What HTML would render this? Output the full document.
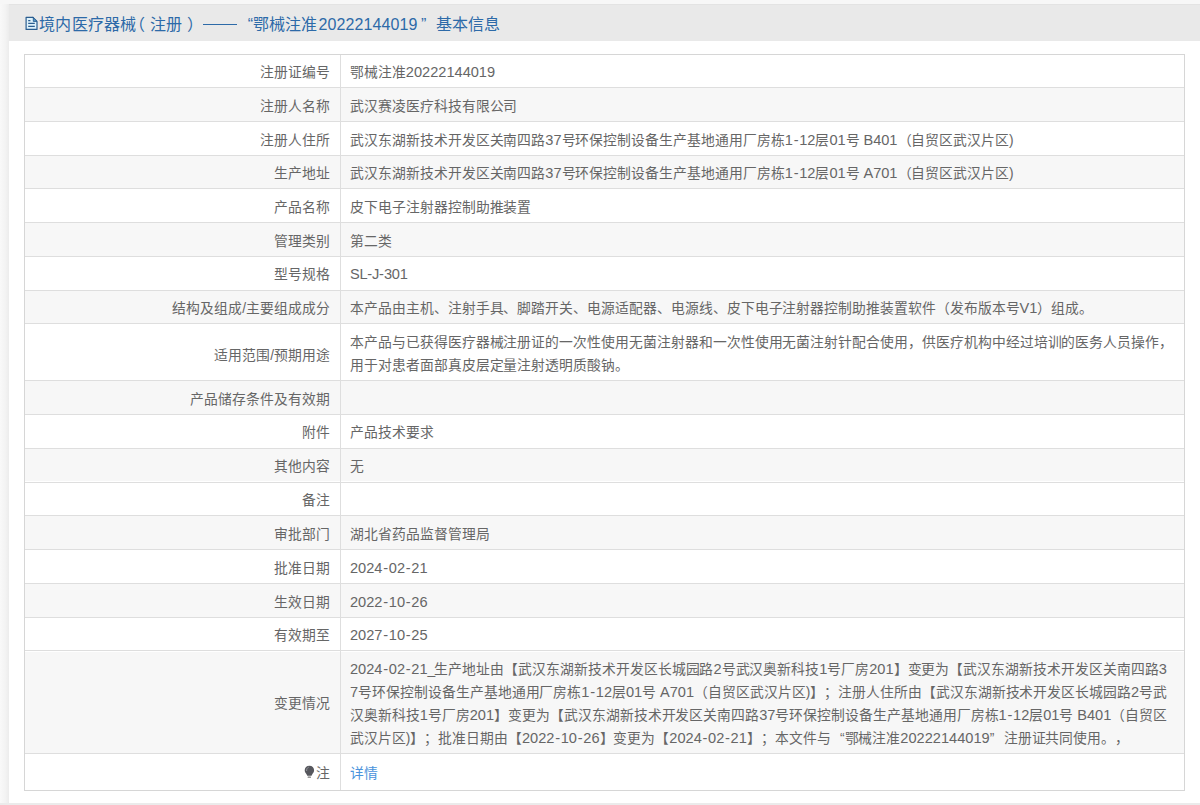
<!DOCTYPE html>
<html lang="zh-CN"><head><meta charset="utf-8">
<style>
html,body{margin:0;padding:0;text-spacing-trim:space-all;}
body{width:1200px;height:805px;background:#f4f4f4;position:relative;overflow:hidden;font-family:"Liberation Sans",sans-serif;}
#lstrip{position:absolute;left:0;top:0;width:8.5px;height:805px;background:linear-gradient(to right,#f9f9f9,#f3f3f3 60%,#ececec);}
#tstrip{position:absolute;left:0;top:0;width:1200px;height:3.5px;background:#f7f7f7;}
#bstrip{position:absolute;left:0;top:803px;width:1200px;height:2px;background:#ebebeb;}
#panel{position:absolute;left:8.5px;top:3.5px;width:1191.5px;height:799.5px;background:#fff;}
#hdr{position:absolute;left:8.5px;top:3.5px;width:1191.5px;height:37px;background:#e9e9e9;border-top:0.6px solid #e3e3e3;box-sizing:border-box;}
.t{position:absolute;top:13.50px;font-size:16px;line-height:22px;color:#2d6aa8;white-space:nowrap;}
#ico{position:absolute;left:24.5px;top:15.5px;}
#tbl{position:absolute;left:24px;top:54px;width:1159px;height:735px;border:1px solid #d6d6d6;}
.bg{position:absolute;left:25px;width:1159px;background:#f7f7f7;}
.hl{position:absolute;left:25px;width:1159px;height:1px;background:#dedede;}
#vline{position:absolute;left:340px;top:55px;width:1px;height:735px;background:#dedede;z-index:2;}
.lb{position:absolute;right:869.9px;line-height:23px;font-size:13.8px;color:#666;white-space:nowrap;text-align:right;}
.vl{position:absolute;left:350px;letter-spacing:-0.05px;line-height:23px;font-size:13.8px;color:#666;white-space:nowrap;}
i{font-style:normal;}
i.d{letter-spacing:0.00px;font-size:14.6px;}
i.u{letter-spacing:-0.8px;}
i.s{letter-spacing:0px;}
i.h{margin:0 0.75px;font-size:14.6px;}
i.ql,i.qr{display:inline-block;width:14px;}
i.ql{text-align:right;}
i.qr{text-align:left;}
a{color:#4a93dc;text-decoration:none;}
.bulb{vertical-align:0.5px;margin-right:1px;}
</style></head><body>
<div id="lstrip"></div><div id="tstrip"></div><div id="bstrip"></div>
<div id="panel"></div>
<div id="hdr"></div>
<svg id="ico" width="14" height="15" viewBox="0 0 14 15"><path d="M1.1 1.3H7.9L12 5.4V13.4H1.1Z" fill="#dff2fb" stroke="#2a5d90" stroke-width="1.2" stroke-linejoin="round"/><path d="M7.9 1.3L12 5.4H8.3V1.3Z" fill="#5a9fd0" stroke="#2a5d90" stroke-width="0.9" stroke-linejoin="round"/><path d="M3.2 4.6H5.4M3.2 7.4H9.8M3.2 10.4H9.8" stroke="#2a5d90" stroke-width="1.2"/></svg>
<div class="t" style="left:39px;letter-spacing:0.25px">境内医疗器械</div>
<div class="t" style="left:129px">（</div>
<div class="t" style="left:149.5px;letter-spacing:0.3px">注册</div>
<div class="t" style="left:186.5px">）</div>
<div style="position:absolute;left:203px;top:23.5px;width:33.5px;height:1.3px;background:#2d6aa8"></div>
<div class="t" style="left:237px;width:16px;text-align:right">“</div>
<div class="t" style="left:253px;letter-spacing:0.15px">鄂械注准</div>
<div class="t" style="left:318.5px;letter-spacing:0.1px">20222144019</div>
<div class="t" style="left:421px">”</div>
<div class="t" style="left:436px;letter-spacing:0px">基本信息</div>
<div id="tbl"></div>
<div id="vline"></div>
<div class="bg" style="top:88.3px;height:32.6px"></div>
<div class="bg" style="top:155.6px;height:32.8px"></div>
<div class="bg" style="top:223.1px;height:32.7px"></div>
<div class="bg" style="top:290.5px;height:32.8px"></div>
<div class="bg" style="top:381.1px;height:32.7px"></div>
<div class="bg" style="top:448.7px;height:32.8px"></div>
<div class="bg" style="top:516.3px;height:32.8px"></div>
<div class="bg" style="top:583.9px;height:32.8px"></div>
<div class="bg" style="top:651.5px;height:101.2px"></div>
<div class="hl" style="top:87px"></div>
<div class="hl" style="top:121px"></div>
<div class="hl" style="top:155px"></div>
<div class="hl" style="top:188px"></div>
<div class="hl" style="top:222px"></div>
<div class="hl" style="top:256px"></div>
<div class="hl" style="top:290px"></div>
<div class="hl" style="top:323px"></div>
<div class="hl" style="top:380px"></div>
<div class="hl" style="top:414px"></div>
<div class="hl" style="top:448px"></div>
<div class="hl" style="top:482px"></div>
<div class="hl" style="top:515px"></div>
<div class="hl" style="top:549px"></div>
<div class="hl" style="top:583px"></div>
<div class="hl" style="top:617px"></div>
<div class="hl" style="top:650px"></div>
<div class="hl" style="top:753px"></div>
<div class="lb" style="top:61.40px">注册证编号</div>
<div class="vl" style="top:61.40px">鄂械注准<i class="d">20222144019</i></div>
<div class="lb" style="top:94.90px">注册人名称</div>
<div class="vl" style="top:94.90px">武汉赛凌医疗科技有限公司</div>
<div class="lb" style="top:128.50px">注册人住所</div>
<div class="vl" style="top:128.50px">武汉东湖新技术开发区关南四路<i class="d">37</i>号环保控制设备生产基地通用厂房栋<i class="d">1</i><i class="h">-</i><i class="d">12</i>层<i class="d">01</i>号<i class="s"> </i><i class="d">B401</i>（自贸区武汉片区)</div>
<div class="lb" style="top:162.20px">生产地址</div>
<div class="vl" style="top:162.20px">武汉东湖新技术开发区关南四路<i class="d">37</i>号环保控制设备生产基地通用厂房栋<i class="d">1</i><i class="h">-</i><i class="d">12</i>层<i class="d">01</i>号<i class="s"> </i><i class="d">A701</i>（自贸区武汉片区)</div>
<div class="lb" style="top:196.00px">产品名称</div>
<div class="vl" style="top:196.00px">皮下电子注射器控制助推装置</div>
<div class="lb" style="top:229.70px">管理类别</div>
<div class="vl" style="top:229.70px">第二类</div>
<div class="lb" style="top:263.40px">型号规格</div>
<div class="vl" style="top:263.40px"><i class="d" style="letter-spacing:-0.3px">SL</i><i class="h" style="margin:0">-</i><i class="d" style="letter-spacing:-0.3px">J</i><i class="h" style="margin:0">-</i><i class="d" style="letter-spacing:-0.2px">301</i></div>
<div class="lb" style="top:297.10px">结构及组成/主要组成成分</div>
<div class="vl" style="top:297.10px">本产品由主机、注射手具、脚踏开关、电源适配器、电源线、皮下电子注射器控制助推装置软件（发布版本号<i class="d">V1</i>）组成。</div>
<div class="lb" style="top:343.80px">适用范围/预期用途</div>
<div class="vl" style="top:330.60px">本产品与已获得医疗器械注册证的一次性使用无菌注射器和一次性使用无菌注射针配合使用，供医疗机构中经过培训的医务人员操作，<br>用于对患者面部真皮层定量注射透明质酸钠。</div>
<div class="lb" style="top:387.70px">产品储存条件及有效期</div>
<div class="lb" style="top:421.40px">附件</div>
<div class="vl" style="top:421.40px">产品技术要求</div>
<div class="lb" style="top:455.30px">其他内容</div>
<div class="vl" style="top:455.30px">无</div>
<div class="lb" style="top:489.10px">备注</div>
<div class="lb" style="top:522.90px">审批部门</div>
<div class="vl" style="top:522.90px">湖北省药品监督管理局</div>
<div class="lb" style="top:556.70px">批准日期</div>
<div class="vl" style="top:556.70px"><i class="d">2024</i><i class="h">-</i><i class="d">02</i><i class="h">-</i><i class="d">21</i></div>
<div class="lb" style="top:590.50px">生效日期</div>
<div class="vl" style="top:590.50px"><i class="d">2022</i><i class="h">-</i><i class="d">10</i><i class="h">-</i><i class="d">26</i></div>
<div class="lb" style="top:624.30px">有效期至</div>
<div class="vl" style="top:624.30px"><i class="d">2027</i><i class="h">-</i><i class="d">10</i><i class="h">-</i><i class="d">25</i></div>
<div class="lb" style="top:692.30px">变更情况</div>
<div class="vl" style="top:657.80px"><i class="d">2024</i><i class="h">-</i><i class="d">02</i><i class="h">-</i><i class="d">21</i><i class="u">_</i>生产地址由【武汉东湖新技术开发区长城园路<i class="d">2</i>号武汉奥新科技<i class="d">1</i>号厂房<i class="d">201</i>】变更为【武汉东湖新技术开发区关南四路<i class="d">3</i><br><i class="d">7</i>号环保控制设备生产基地通用厂房栋<i class="d">1</i><i class="h">-</i><i class="d">12</i>层<i class="d">01</i>号<i class="s"> </i><i class="d">A701</i>（自贸区武汉片区)】；注册人住所由【武汉东湖新技术开发区长城园路<i class="d">2</i>号武<br>汉奥新科技<i class="d">1</i>号厂房<i class="d">201</i>】变更为【武汉东湖新技术开发区关南四路<i class="d">37</i>号环保控制设备生产基地通用厂房栋<i class="d">1</i><i class="h">-</i><i class="d">12</i>层<i class="d">01</i>号<i class="s"> </i><i class="d">B401</i>（自贸区<br>武汉片区)】；批准日期由【<i class="d">2022</i><i class="h">-</i><i class="d">10</i><i class="h">-</i><i class="d">26</i>】变更为【<i class="d">2024</i><i class="h">-</i><i class="d">02</i><i class="h">-</i><i class="d">21</i>】；本文件与<i class="ql">“</i>鄂械注准<i class="d">20222144019</i><i class="qr">”</i>注册证共同使用。，</div>
<div class="lb" style="top:762.00px"><svg class="bulb" width="11" height="13" viewBox="0 0 11 13"><path d="M5.4 0.7C2.6 0.7 0.7 2.8 0.7 5.3C0.7 7 1.7 8 2.5 9.2C2.9 9.8 3.1 10.4 3.2 10.8H7.6C7.7 10.4 7.9 9.8 8.3 9.2C9.1 8 10.1 7 10.1 5.3C10.1 2.8 8.2 0.7 5.4 0.7Z" fill="#56575d"/><path d="M2.6 5.6C2.5 4 3.3 2.7 4.3 2.3" stroke="#9c9ea4" stroke-width="0.9" fill="none" stroke-linecap="round"/><rect x="3.6" y="11.6" width="3.4" height="1.1" rx="0.5" fill="#777"/></svg>注</div>
<div class="vl" style="top:762.00px"><a>详情</a></div>
</body></html>
